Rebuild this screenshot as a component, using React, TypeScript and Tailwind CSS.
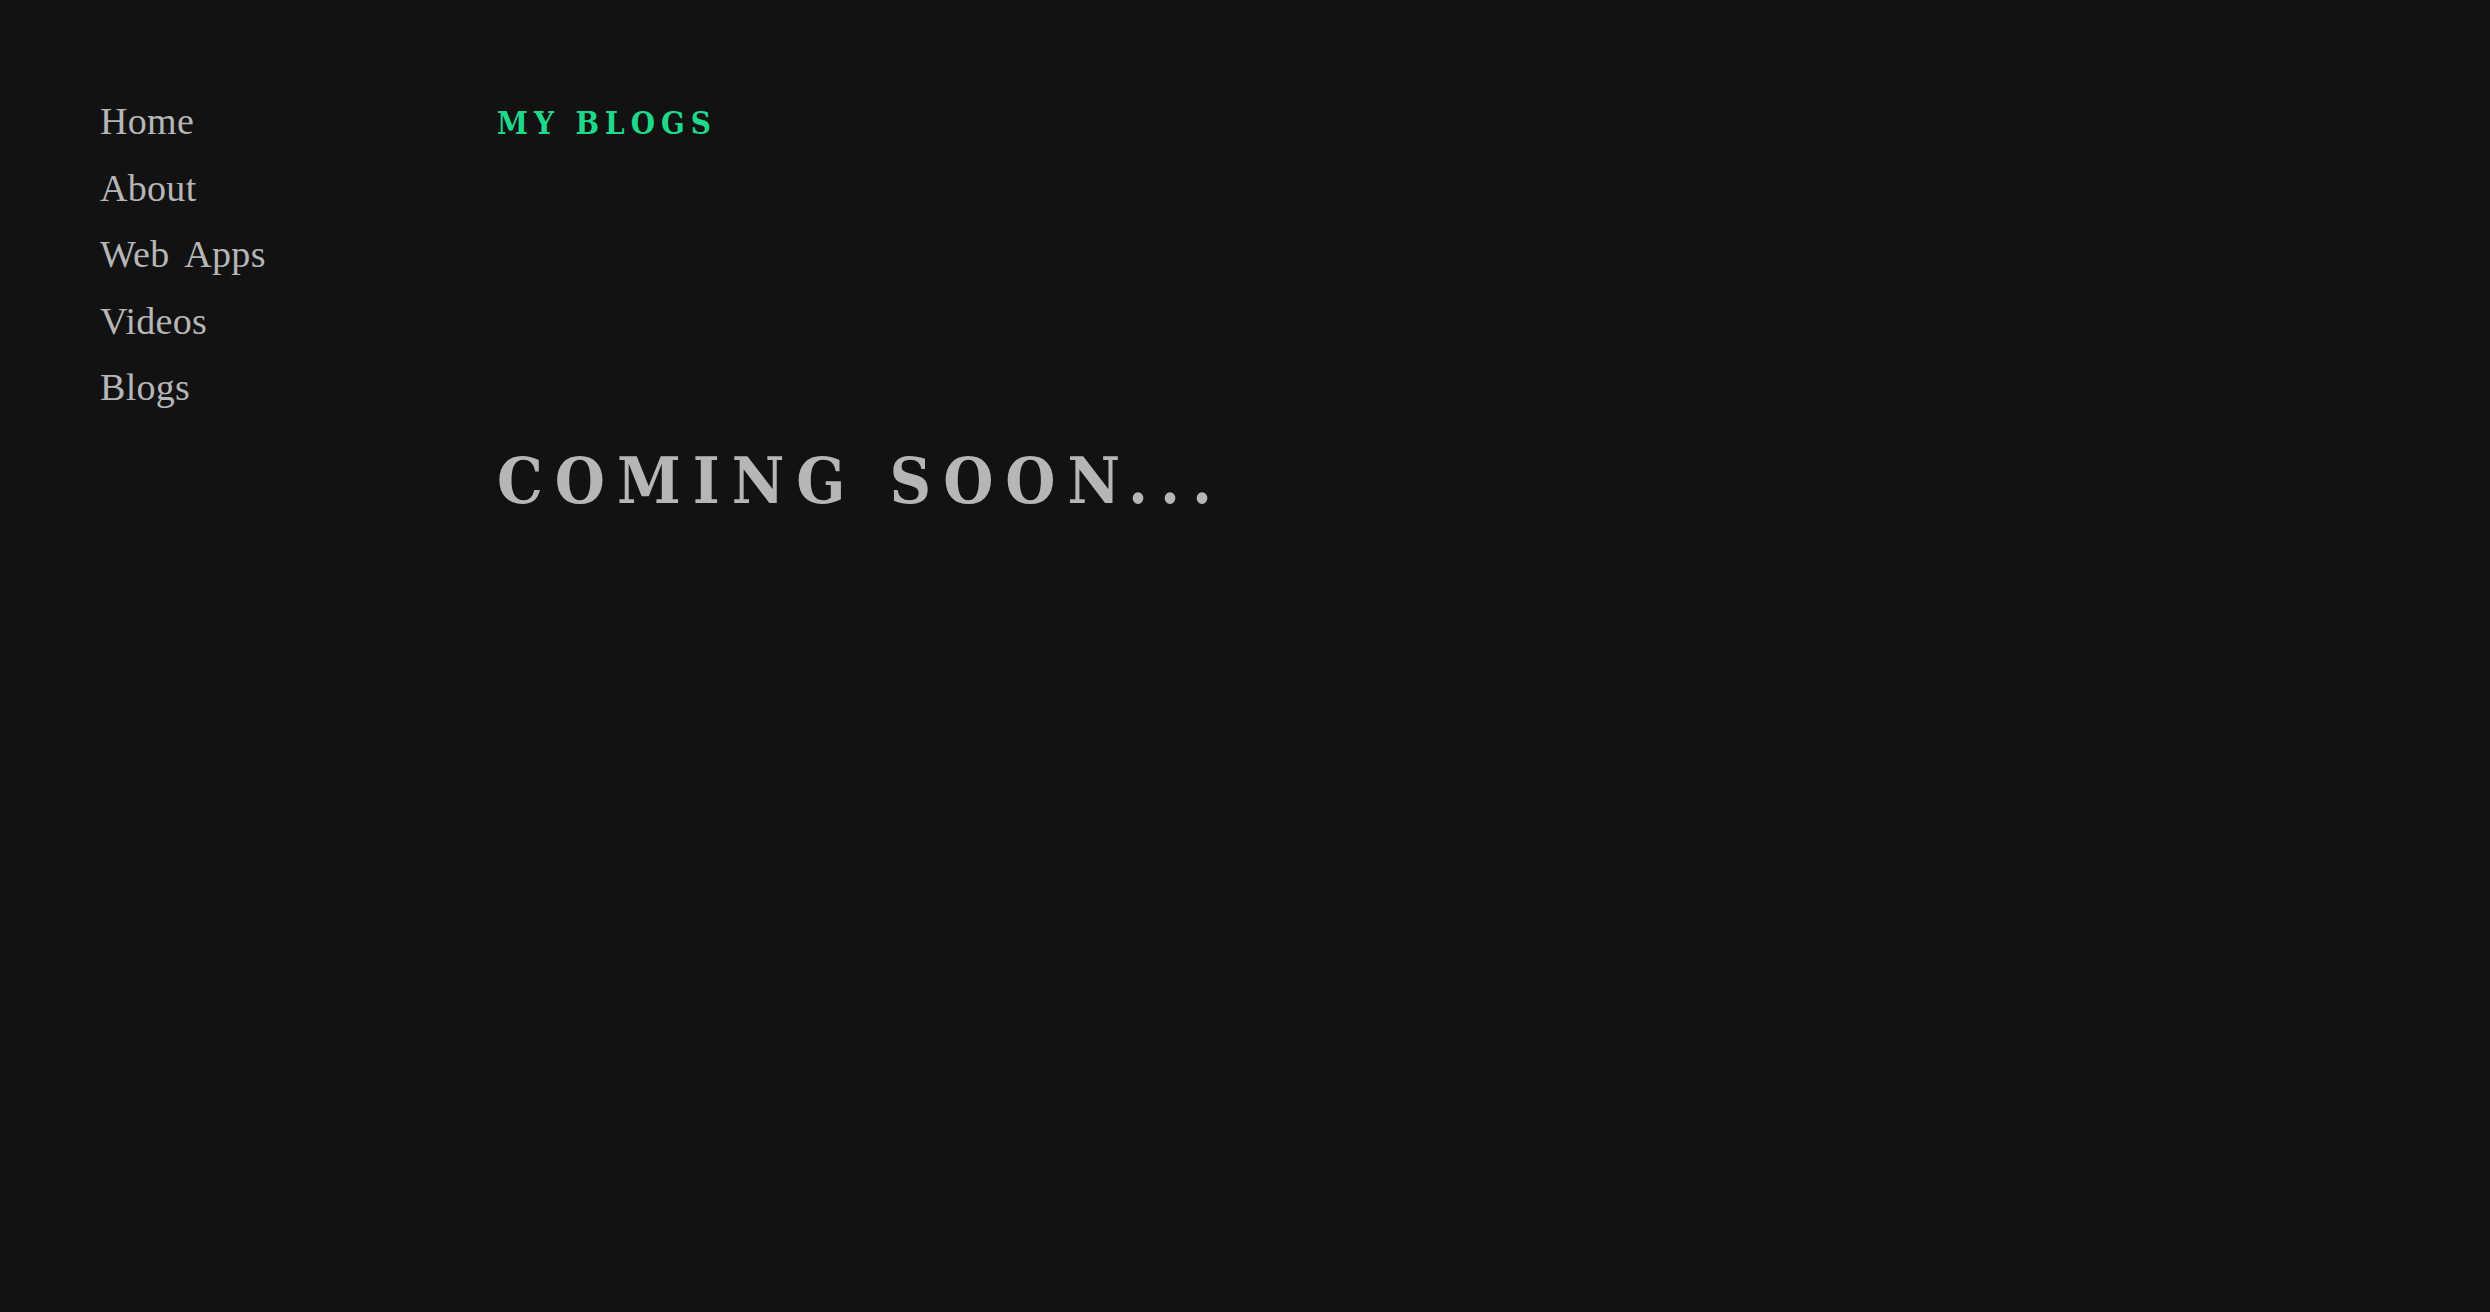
const links = ["Home", "About", "Web Apps", "Videos", "Blogs"];

export default function App() {
	return (
		<div className="min-h-screen w-full bg-[#121212] flex px-[100px] pt-[88px]">
			<nav className="w-[397px] shrink-0 flex flex-col font-['Liberation_Serif',serif] text-[38px] leading-[66.5px] [word-spacing:7px] tracking-[0.3px] text-[#b6b6b6]">
				{links.map((l) => (
					<a key={l} href="#" className="w-fit">
						{l}
					</a>
				))}
			</nav>
			<main className="flex flex-col font-['DejaVu_Serif_Condensed','DejaVu_Serif',serif] font-stretch-condensed font-bold">
				<h1 className="mt-[20px] text-[31px] leading-[31px] tracking-[6px] text-[#1fd98a]">
					MY BLOGS
				</h1>
				<p className="mt-[310px] text-[64px] leading-[64px] tracking-[12px] text-[#b6b6b6]">
					COMING SOON...
				</p>
			</main>
		</div>
	);
}
